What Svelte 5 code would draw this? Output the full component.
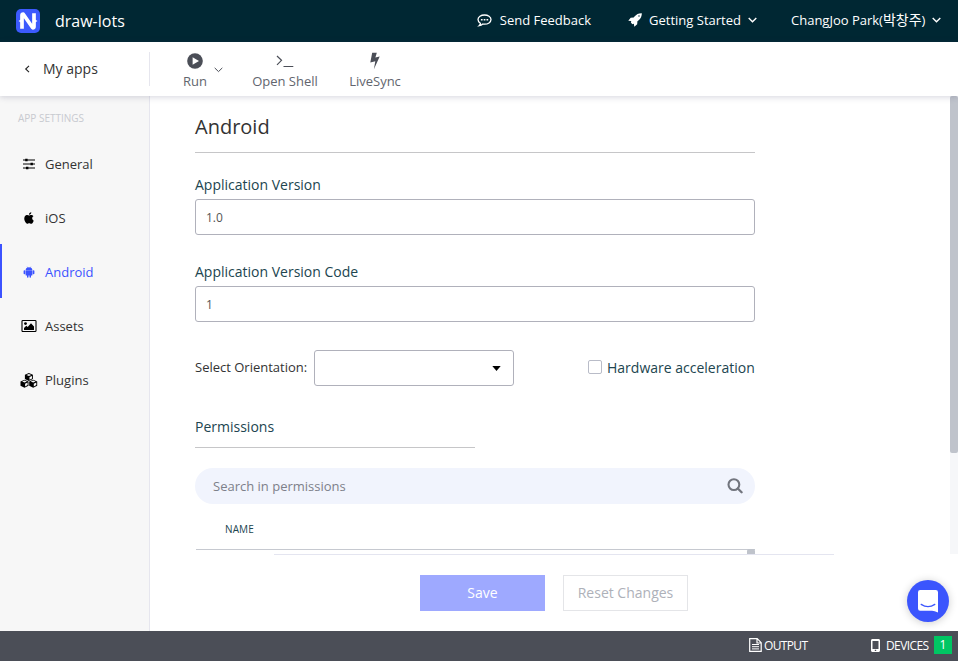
<script>
  let version = $state('1.0');
  let versionCode = $state('1');
  let query = $state('');
  let hardware = $state(false);

  const sections = [
    { id: 'general', label: 'General' },
    { id: 'ios', label: 'iOS' },
    { id: 'android', label: 'Android' },
    { id: 'assets', label: 'Assets' },
    { id: 'plugins', label: 'Plugins' }
  ];
  let active = $state('android');
</script>

{#snippet cube(x, y)}
  <g transform="translate({x} {y})">
    <path d="M4.200 0 8.200 1.700V6L4.200 8 .2 6V1.700z" fill="currentColor" />
    <path d="M4.200.9 6.600 1.900 4.200 2.900 1.800 1.900zM4.800 4 7.300 2.900V5.400L4.800 6.700z" fill="#f7f7f7" />
  </g>
{/snippet}

{#snippet icon(id)}
  {#if id === 'general'}
    <svg width="16" height="16" viewBox="0 0 16 16">
      <path d="M2 4h12M2 8h12M2 12h12" stroke="currentColor" stroke-width="1.200" />
      <path d="M4.200 2.700h2.400v2.600H4.200zM9.500 6.700h2.400v2.600H9.500zM5 10.700h2.400v2.600H5z" fill="currentColor" />
    </svg>
  {:else if id === 'ios'}
    <svg width="14" height="14" viewBox="0 0 24 24">
      <path fill="currentColor" d="M18.71 19.5c-.83 1.24-1.71 2.45-3.05 2.47-1.34.03-1.77-.79-3.29-.79-1.53 0-2 .77-3.27.82-1.31.05-2.3-1.32-3.14-2.53C4.25 17 2.94 12.45 4.7 9.39c.87-1.52 2.43-2.48 4.12-2.51 1.28-.02 2.5.87 3.29.87.78 0 2.26-1.07 3.81-.91.65.03 2.47.26 3.64 1.98-.09.06-2.17 1.28-2.15 3.81.03 3.02 2.65 4.03 2.68 4.04-.03.07-.42 1.44-1.38 2.83M13 3.5c.73-.83 1.94-1.46 2.94-1.5.13 1.17-.34 2.35-1.04 3.19-.69.85-1.83 1.51-2.95 1.42-.15-1.15.41-2.35 1.05-3.11z" />
    </svg>
  {:else if id === 'android'}
    <svg width="12" height="12" viewBox="0 0 12 12" fill="currentColor">
      <path d="M2.600 4.100a3.400 3.100 0 0 1 1.700-2.600L3.700.6l.3-.2.700 1a4 4 0 0 1 2.600 0l.700-1 .3.200-.6.900a3.400 3.100 0 0 1 1.700 2.600z" />
      <path d="M2.600 4.300h6.800v4.600a.7.700 0 0 1-.7.700H8v1.500a.75.75 0 0 1-1.500 0V9.600h-1v1.500a.75.75 0 0 1-1.500 0V9.600h-.7a.7.700 0 0 1-.7-.7z" />
      <rect x=".6" y="4.300" width="1.700" height="4" rx=".75" />
      <rect x="9.700" y="4.300" width="1.700" height="4" rx=".75" />
    </svg>
  {:else if id === 'assets'}
    <svg width="16" height="14" viewBox="0 0 16 14">
      <rect x="1" y="1.500" width="14" height="11" rx=".8" fill="none" stroke="currentColor" stroke-width="1.100" />
      <circle cx="4.500" cy="4.600" r="1.400" fill="currentColor" />
      <path d="M3 11V9l2.300-2.300L6.700 8 10 4.300 13 7.500V11z" fill="currentColor" />
    </svg>
  {:else}
    <svg width="18" height="15" viewBox="0 0 18 15">
      {@render cube(4.700, 0)}
      {@render cube(0.300, 6.700)}
      {@render cube(9, 6.700)}
    </svg>
  {/if}
{/snippet}

<div class="app">
  <header class="topbar">
    <svg class="logo" width="24" height="24" viewBox="0 0 24 24">
      <rect width="24" height="24" rx="5" fill="#3c5afd" />
      <path d="M6 19.800V6.500Q6 5.200 7.300 5.200L16.700 18.800Q18 18.800 18 17.500V4.200" fill="none" stroke="#fff" stroke-width="3.700" stroke-linejoin="round" />
      <path d="M2.500 12 5 10.600v2.800zM21.500 12 19 10.600v2.800z" fill="#fff" />
    </svg>
    <span class="project">draw-lots</span>
    <nav>
      <a class="feedback">
        <svg width="15" height="13" viewBox="0 0 15 13">
          <path d="M7.500 1C11 1 14 2.900 14 5.600s-3 4.600-6.500 4.600q-.9 0-1.700-.15Q4.300 11.400 2.200 11.700q1-.9 1.200-2.300C2 8.600 1 7.200 1 5.600 1 2.900 4 1 7.500 1z" fill="none" stroke="#fff" stroke-width="1.300" />
          <path d="M3.900 4.900h1.700v1.500H3.900zM6.700 4.900h1.700v1.500H6.700zM9.500 4.900h1.700v1.500H9.500z" fill="#fff" />
        </svg>
        <span>Send Feedback</span>
      </a>
      <a class="started">
        <svg width="14" height="14" viewBox="0 0 14 14">
          <path fill="#fff" fill-rule="evenodd" d="M13.800.2Q9.300 0 6.500 3.600L5.700 4.600 2.700 4.800.3 7.700 2.900 8.100 3.300 8.700 2.800 9.600 4.400 11.200 5.300 10.700 5.900 11.100 6.300 13.800 9.200 11.300 9.400 8.300 10.400 7.500Q14 4.700 13.800.2zM11 2.300a.7.700 0 1 1 0 1.400.7.700 0 0 1 0-1.400z" />
        </svg>
        <span>Getting Started</span>
        <svg class="chev" width="9" height="6" viewBox="0 0 9 6"><path d="M.7 1l3.800 3.700L8.300 1" fill="none" stroke="#fff" stroke-width="1.400" /></svg>
      </a>
      <a class="user">
        <span class="name">ChangJoo Park(<span class="hangul">박창주</span>)</span>
        <svg class="chev" width="9" height="6" viewBox="0 0 9 6"><path d="M.7 1l3.800 3.700L8.300 1" fill="none" stroke="#fff" stroke-width="1.400" /></svg>
      </a>
    </nav>
  </header>

  <div class="toolbar">
    <a class="back">
      <svg width="6" height="8" viewBox="0 0 6 8"><path d="M5 .8 1.700 4 5 7.200" fill="none" stroke="#222" stroke-width="1.100" /></svg>
      <span>My apps</span>
    </a>
    <div class="tool run">
      <svg width="16" height="16" viewBox="0 0 16 16">
        <circle cx="8" cy="8" r="7.800" fill="#4b4e57" />
        <path d="M5.600 4.200v7.600L12 8z" fill="#fff" />
      </svg>
      <span>Run</span>
    </div>
    <svg class="runmore" width="9" height="6" viewBox="0 0 9 6"><path d="M.7.900l3.800 3.700L8.300.9" fill="none" stroke="#4b4e57" /></svg>
    <div class="tool shell">
      <svg width="18" height="16" viewBox="0 0 18 16"><path d="M1 3l4.500 4.300L1 11.800M7.500 13.500h9.800" fill="none" stroke="#4b4e57" stroke-width="1.200" /></svg>
      <span>Open Shell</span>
    </div>
    <div class="tool sync">
      <svg width="12" height="18" viewBox="0 0 12 18"><path d="M3.200.7h4.600L6.400 5.500l4.300-1L4.900 17.200 6.300 9.300l-5 1.200z" fill="#4b4e57" /></svg>
      <span>LiveSync</span>
    </div>
  </div>

  <div class="body">
    <aside>
      <h2>APP SETTINGS</h2>
      {#each sections as section}
        <button class="item" class:active={active === section.id} onclick={() => (active = section.id)}>
          <span class="glyph">{@render icon(section.id)}</span>
          <span>{section.label}</span>
        </button>
      {/each}
    </aside>

    <main>
      <div class="scroll">
        <form>
          <h1>Android</h1>
          <label class="caption" for="version">Application Version</label>
          <input id="version" class="box" bind:value={version} />
          <label class="caption second" for="code">Application Version Code</label>
          <input id="code" class="box" bind:value={versionCode} />

          <div class="row">
            <span class="orient">Select Orientation:</span>
            <div class="select">
              <svg width="9" height="5" viewBox="0 0 9 5"><path d="M.3 0h8.400L4.500 5z" fill="#000" /></svg>
            </div>
            <label class="check"><input type="checkbox" bind:checked={hardware} /><span>Hardware acceleration</span></label>
          </div>

          <h3>Permissions</h3>
          <div class="search">
            <input placeholder="Search in permissions" bind:value={query} />
            <svg width="16" height="16" viewBox="0 0 16 16"><circle cx="6.900" cy="6.600" r="5.400" fill="none" stroke="#72757e" stroke-width="2.100" /><path d="M10.800 10.500l3.800 3.800" stroke="#72757e" stroke-width="2.300" stroke-linecap="round" /></svg>
          </div>
          <div class="thead">NAME</div>
          <div class="tbody"><i></i></div>
        </form>
        <div class="track"><div class="thumb"></div></div>
      </div>
      <div class="actions">
        <button class="save">Save</button>
        <button class="reset">Reset Changes</button>
      </div>
    </main>
  </div>

  <footer>
    <span class="output">
      <svg width="13" height="14" viewBox="0 0 13 14">
        <path d="M.7.700h7.500l4 4v8.600H.7zM8 .8v4.200h4.200" fill="none" stroke="#fff" stroke-width="1.200" />
        <path d="M3 6.500h7M3 8.700h7M3 10.900h7" stroke="#fff" />
      </svg>
      <span>OUTPUT</span>
    </span>
    <span class="devices">
      <svg width="9" height="13" viewBox="0 0 9 13"><path fill="#fff" fill-rule="evenodd" d="M1.500 0h6A1.400 1.400 0 0 1 9 1.400v10.200A1.400 1.400 0 0 1 7.500 13h-6A1.400 1.400 0 0 1 0 11.600V1.400A1.400 1.400 0 0 1 1.500 0zM1.500 2v8h6V2zM3.800 10.800v1.300h1.400v-1.300z" /></svg>
      <span>DEVICES</span>
    </span>
    <b>1</b>
  </footer>

  <button class="chat" aria-label="Chat">
    <svg width="20" height="23" viewBox="0 0 20 23">
      <path d="M2.200 0h15.600Q20 0 20 2.200V22.600Q16.500 20.700 14 20.700H2.200Q0 20.700 0 18.500V2.200Q0 0 2.200 0z" fill="#fff" />
      <path d="M3.200 14.400q6.800 4.600 13.600 0" fill="none" stroke="#3b55fd" stroke-width="1.300" stroke-linecap="round" />
    </svg>
  </button>
</div>

<style>
  :global(body) { margin: 0; overflow: hidden; }
  .app, .app * { box-sizing: border-box; }
  .app {
    position: relative;
    display: flex;
    flex-direction: column;
    width: 958px;
    height: 661px;
    background: #fff;
    font-family: 'Open Sans', 'Noto Sans', 'Noto Sans CJK KR', sans-serif;
    font-size: 13px;
    color: #333;
    white-space: nowrap;
  }
  svg { display: block; flex: none; }
  button, input { font: inherit; border: 0; margin: 0; padding: 0; background: none; }

  .topbar {
    display: flex;
    align-items: center;
    flex: none;
    height: 42px;
    padding: 0 17px 0 16px;
    background: #002733;
    color: #fff;
  }
  .project { margin-left: 15px; font-size: 16px; }
  nav { display: flex; margin-left: auto; height: 42px; padding-bottom: 2px; }
  nav a { display: flex; align-items: center; justify-content: space-between; }
  nav a > span { height: 20px; line-height: 20px; }
  .feedback { width: 114px; }
  .started { width: 129px; margin-left: 37px; }
  .user { width: 150px; margin-left: 34px; }
  .hangul { font-size: 14px; line-height: 1; }

  .toolbar {
    position: relative;
    z-index: 1;
    display: flex;
    flex: none;
    height: 54px;
    background: #fff;
    box-shadow: 0 1px 6px rgba(60, 60, 100, 0.22);
    color: #62656e;
  }
  .back {
    display: flex;
    align-items: center;
    width: 150px;
    height: 34px;
    margin-top: 10px;
    padding-left: 24px;
    border-right: 1px solid #e6e6ee;
    color: #333;
    font-size: 14px;
  }
  .back span { margin-left: 13px; padding-bottom: 2px; }
  .tool { display: flex; flex-direction: column; align-items: center; padding-top: 10px; }
  .tool svg { height: 18px; }
  .tool span { line-height: 18px; margin-top: 2px; }
  .run { width: 30px; margin-left: 30px; }
  .runmore { margin: 25px 0 0 4px; }
  .shell { width: 70px; margin-left: 27px; }
  .sync { width: 60px; margin-left: 25px; }

  .body { display: flex; flex: 1; min-height: 0; }
  aside {
    display: flex;
    flex-direction: column;
    width: 150px;
    background: #f7f7f7;
    border-right: 1px solid #e6e6ee;
  }
  h2 {
    margin: 0;
    height: 40px;
    padding: 15px 0 0 18px;
    font-size: 10px;
    line-height: 15px;
    font-weight: 400;
    color: #c8cad0;
  }
  .item {
    display: flex;
    align-items: center;
    height: 54px;
    padding: 2px 0 0 18px;
    border-left: 2px solid transparent;
    color: #333;
  }
  .glyph { display: flex; justify-content: center; width: 18px; margin-right: 7px; color: #000; }
  .active, .active .glyph { color: #3c53ff; }
  .item.active { border-left-color: #3c53ff; }

  main { display: flex; flex-direction: column; flex: 1; }
  .scroll { display: flex; justify-content: space-between; height: 458px; overflow: hidden; }
  form { width: 560px; margin-left: 45px; }
  h1 {
    margin: 0 0 22px;
    height: 57px;
    padding-top: 17px;
    line-height: 28px;
    font-size: 20px;
    font-weight: 400;
    border-bottom: 1px solid #c6c6c8;
  }
  .caption { display: block; height: 24px; line-height: 20px; font-size: 14px; color: #21454f; }
  .second { margin-top: 27px; }
  .box {
    display: block;
    width: 560px;
    height: 36px;
    padding: 1px 10px 0;
    border: 1px solid #b0b1bb;
    border-radius: 3px;
    font-size: 12px;
    color: #555;
  }
  .row { display: flex; align-items: center; height: 36px; margin-top: 28px; }
  .select {
    display: flex;
    align-items: center;
    justify-content: flex-end;
    width: 200px;
    height: 36px;
    margin-right: 74px;
    padding-right: 12px;
    border: 1px solid #b0b1bb;
    border-radius: 3px;
  }
  .orient { width: 119px; padding-bottom: 2px; }
  .check { display: flex; align-items: center; padding-bottom: 2px; font-size: 14px; color: #21454f; }
  .check input {
    appearance: none;
    width: 14px;
    height: 14px;
    margin-right: 5px;
    border: 1px solid #b9bcc8;
    border-radius: 2px;
  }
  h3 {
    width: 280px;
    height: 31px;
    margin: 31px 0 20px;
    line-height: 20px;
    font-size: 14px;
    font-weight: 400;
    color: #21454f;
    border-bottom: 1px solid #c6c6c8;
  }
  .search {
    display: flex;
    align-items: center;
    justify-content: space-between;
    height: 36px;
    padding: 0 12px 0 18px;
    border-radius: 18px;
    background: #f1f4fd;
  }
  .search input { width: 400px; outline: 0; }
  .search input::placeholder { color: #7d808a; opacity: 1; }
  .thead {
    height: 46px;
    margin-left: 1px;
    padding-left: 29px;
    line-height: 51px;
    font-size: 10px;
    letter-spacing: 0.1px;
    color: #21454f;
    border-bottom: 1px solid #c6c9d0;
  }
  .tbody { display: flex; justify-content: flex-end; height: 5px; margin-top: -1px; }
  .tbody i { width: 8px; height: 10px; border-radius: 2px; background: #bfc3cb; }
  .track { width: 8px; background: #f6f7f9; }
  .thumb { height: 357px; border-radius: 2px; background: #bfc3cb; }
  .actions {
    display: flex;
    gap: 18px;
    width: 560px;
    height: 77px;
    margin-left: 124px;
    padding: 20px 0 0 146px;
    border-top: 1px solid #e4e5f0;
  }
  .actions button { width: 125px; height: 36px; padding-bottom: 2px; font-size: 14px; }
  .save { background: #9ea9ff; color: #fff; }
  .actions .reset { border: 1px solid #e4e5e8; color: #aeb1b9; }

  footer {
    display: flex;
    align-items: center;
    flex: none;
    height: 30px;
    padding-left: 749px;
    background: #4b4e57;
    color: #fff;
    font-size: 12px;
  }
  footer span { display: flex; align-items: center; }
  footer span span { padding-bottom: 1px; }
  footer svg { margin-bottom: 2px; }
  .output { width: 122px; }
  .output span { margin-left: 2px; letter-spacing: -0.65px; }
  .devices { width: 63px; }
  .devices span { margin-left: 6px; letter-spacing: -0.6px; }
  footer b { width: 18px; line-height: 18px; margin-bottom: 2px; text-align: center; background: #00c663; font-weight: 400; }
  .chat {
    position: absolute;
    left: 907px;
    top: 580px;
    display: flex;
    align-items: center;
    justify-content: center;
    width: 42px;
    height: 42px;
    border-radius: 50%;
    background: #3b55fd;
    box-shadow: 0 1px 8px rgba(0, 0, 0, 0.2);
  }
</style>
